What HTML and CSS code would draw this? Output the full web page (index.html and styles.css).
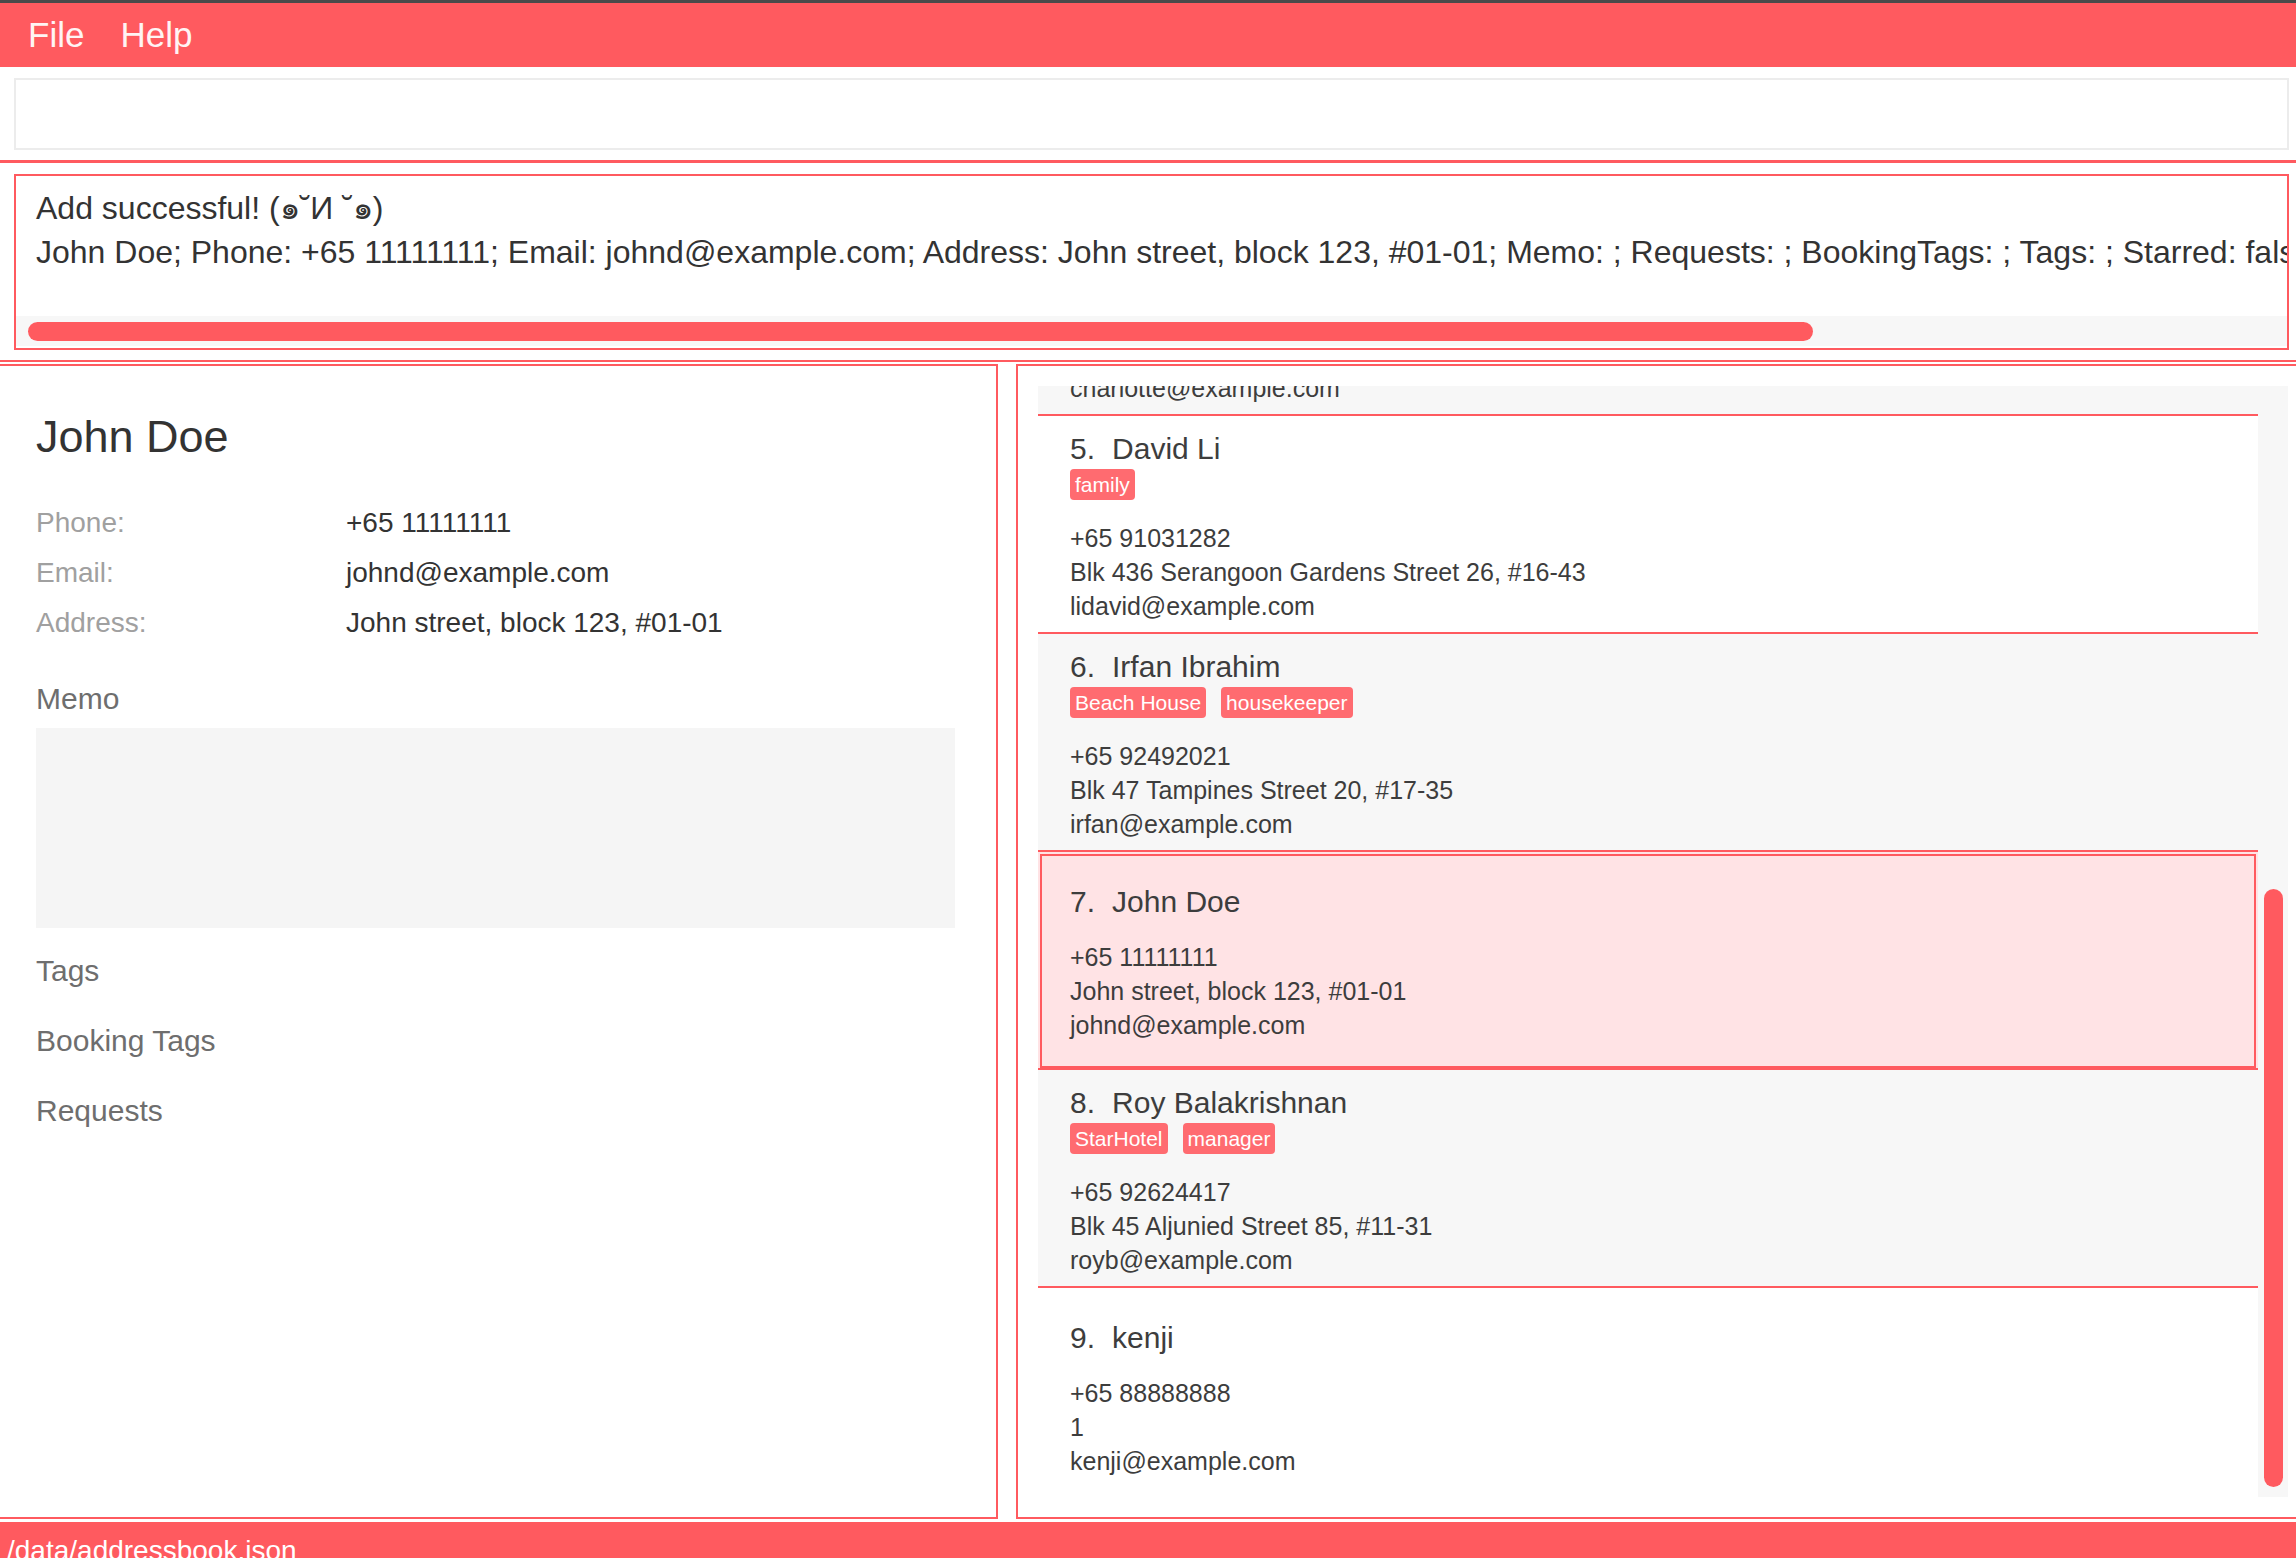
FILE: index.html
```html
<!DOCTYPE html>
<html lang="en">
<head>
<meta charset="utf-8">
<title>AddressBook</title>
<link rel="stylesheet" href="styles.css">
</head>
<body>
<div class="app">
  <div class="topline"></div>
  <nav class="menubar">
    <span class="menu-item">File</span>
    <span class="menu-item">Help</span>
  </nav>
  <section class="command-area">
    <div class="command-box"></div>
  </section>
  <section class="result-area">
    <div class="result-box">
      <div class="result-text">
        <div class="result-line">Add successful! (๑˘И ˘๑)</div>
        <div class="result-line">John Doe; Phone: +65 11111111; Email: johnd@example.com; Address: John street, block 123, #01-01; Memo: ; Requests: ; BookingTags: ; Tags: ; Starred: false</div>
      </div>
      <div class="hscroll"><div class="hthumb"></div></div>
    </div>
  </section>
  <main class="main">
    <section class="detail-panel">
      <h1 class="detail-name">John Doe</h1>
      <div class="detail-grid">
        <span class="detail-label">Phone:</span><span class="detail-value">+65 11111111</span>
        <span class="detail-label">Email:</span><span class="detail-value">johnd@example.com</span>
        <span class="detail-label">Address:</span><span class="detail-value">John street, block 123, #01-01</span>
      </div>
      <h2 class="section-title memo-title">Memo</h2>
      <div class="memo-box"></div>
      <h2 class="section-title tags-title">Tags</h2>
      <h2 class="section-title">Booking Tags</h2>
      <h2 class="section-title">Requests</h2>
    </section>
    <section class="list-panel">
      <div class="list-viewport">
        <div class="list">
          <article class="card alt">
            <div class="card-title"><span>4.</span><span>Charlotte Oliveiro</span></div>
            <div class="tags"><span class="tag">neighbours</span></div>
            <div class="card-details">
              <div>+65 93210283</div>
              <div>Blk 11 Ang Mo Kio Street 74, #11-04</div>
              <div>charlotte@example.com</div>
            </div>
          </article>
          <article class="card">
            <div class="card-title"><span>5.</span><span>David Li</span></div>
            <div class="tags"><span class="tag">family</span></div>
            <div class="card-details">
              <div>+65 91031282</div>
              <div>Blk 436 Serangoon Gardens Street 26, #16-43</div>
              <div>lidavid@example.com</div>
            </div>
          </article>
          <article class="card alt">
            <div class="card-title"><span>6.</span><span>Irfan Ibrahim</span></div>
            <div class="tags"><span class="tag">Beach House</span><span class="tag">housekeeper</span></div>
            <div class="card-details">
              <div>+65 92492021</div>
              <div>Blk 47 Tampines Street 20, #17-35</div>
              <div>irfan@example.com</div>
            </div>
          </article>
          <article class="card selected">
            <div class="card-title"><span>7.</span><span>John Doe</span></div>
            <div class="tags"></div>
            <div class="card-details">
              <div>+65 11111111</div>
              <div>John street, block 123, #01-01</div>
              <div>johnd@example.com</div>
            </div>
          </article>
          <article class="card alt">
            <div class="card-title"><span>8.</span><span>Roy Balakrishnan</span></div>
            <div class="tags"><span class="tag">StarHotel</span><span class="tag">manager</span></div>
            <div class="card-details">
              <div>+65 92624417</div>
              <div>Blk 45 Aljunied Street 85, #11-31</div>
              <div>royb@example.com</div>
            </div>
          </article>
          <article class="card">
            <div class="card-title"><span>9.</span><span>kenji</span></div>
            <div class="tags"></div>
            <div class="card-details">
              <div>+65 88888888</div>
              <div>1</div>
              <div>kenji@example.com</div>
            </div>
          </article>
        </div>
      </div>
      <div class="vscroll"><div class="vthumb"></div></div>
    </section>
  </main>
  <footer class="statusbar">/data/addressbook.json</footer>
</div>
</body>
</html>
```

FILE: styles.css
```css
html, body {
  margin: 0;
  padding: 0;
  background: #ffffff;
}

body {
  width: 2296px;
  height: 1558px;
  overflow: hidden;
  font-family: "Liberation Sans", "DejaVu Sans", "Noto Sans", sans-serif;
  color: #333333;
}

.app {
  width: 2296px;
  height: 1558px;
  overflow: hidden;
  display: flex;
  flex-direction: column;
}

.app > * {
  flex-shrink: 0;
}

.topline {
  height: 3px;
  background: #4a4a4a;
}

.menubar {
  height: 64px;
  background: #ff5a5f;
  display: flex;
  align-items: center;
  gap: 36px;
  padding-left: 28px;
  box-sizing: border-box;
}

.menu-item {
  color: #fff4f4;
  font-size: 35px;
}

.command-area {
  height: 96px;
  box-sizing: border-box;
  padding: 11px 7px 0 14px;
  border-bottom: 3px solid #ff5a5f;
}

.command-box {
  height: 72px;
  box-sizing: border-box;
  border: 2px solid #ececec;
  background: #ffffff;
}

.result-area {
  height: 199px;
  box-sizing: border-box;
  padding: 11px 7px 0 14px;
  border-bottom: 2px solid #ff5a5f;
}

.result-box {
  height: 176px;
  box-sizing: border-box;
  border: 2px solid #ff5a5f;
  overflow: hidden;
  display: flex;
  flex-direction: column;
}

.result-text {
  flex: 0 0 140px;
  box-sizing: border-box;
  padding: 10px 0 0 20px;
  font-size: 32px;
  line-height: 44px;
  color: #333333;
  white-space: nowrap;
  overflow: hidden;
}

.hscroll {
  flex: 0 0 30px;
  box-sizing: border-box;
  background: #f7f7f7;
  padding: 6px 0 0 12px;
}

.hthumb {
  width: 1785px;
  height: 19px;
  border-radius: 10px;
  background: #ff5a5f;
}

.main {
  height: 1160px;
  box-sizing: border-box;
  padding: 2px 0 3px 0;
  display: flex;
  gap: 18px;
}

.detail-panel {
  flex: 0 0 998px;
  height: 1155px;
  box-sizing: border-box;
  border-top: 2px solid #ff5a5f;
  border-right: 2px solid #ff5a5f;
  border-bottom: 2px solid #ff5a5f;
  padding: 45px 41px 0 36px;
  overflow: hidden;
}

.detail-name {
  margin: 0 0 35px 0;
  font-size: 45px;
  line-height: 52px;
  font-weight: normal;
  color: #333333;
}

.detail-grid {
  display: grid;
  grid-template-columns: 310px 1fr;
  font-size: 28px;
  line-height: 50px;
}

.detail-label {
  color: #a0a0a0;
}

.detail-value {
  color: #333333;
}

.section-title {
  margin: 35px 0 0 0;
  font-size: 30px;
  line-height: 35px;
  font-weight: normal;
  color: #6e6e6e;
}

.memo-title {
  margin-top: 33px;
}

.memo-box {
  margin-top: 12px;
  height: 200px;
  background: #f5f5f5;
}

.tags-title {
  margin-top: 25px;
}

.list-panel {
  flex: 0 0 1294px;
  height: 1155px;
  box-sizing: border-box;
  border: 2px solid #ff5a5f;
  padding: 20px;
  display: flex;
  overflow: hidden;
}

.list-viewport {
  flex: 0 0 1220px;
  height: 1111px;
  overflow: hidden;
}

.list {
  margin-top: -188px;
}

.card {
  height: 218px;
  box-sizing: border-box;
  padding: 4px 0 0 32px;
  border-bottom: 2px solid #ff5a5f;
  background: #ffffff;
  display: flex;
  flex-direction: column;
  justify-content: center;
  color: #3d3d3d;
}

.card.alt {
  background: #f7f7f7;
}

.card.selected {
  background: #ffe3e5;
  outline: 2px solid #ff5a5f;
  outline-offset: -4px;
}

.card-title {
  display: flex;
  gap: 17px;
  font-size: 30px;
  line-height: 40px;
}

.tags {
  display: flex;
  gap: 15px;
  height: 31px;
  margin-bottom: 3px;
}

.tags:empty {
  display: none;
}

.tag {
  background: #ff6b70;
  color: #ffffff;
  font-size: 21px;
  line-height: 31px;
  padding: 0 5px;
  border-radius: 4px;
}

.card-details {
  margin-top: 18px;
  font-size: 25px;
  line-height: 34px;
}

.vscroll {
  flex: 0 0 30px;
  height: 1111px;
  box-sizing: border-box;
  background: #f7f7f7;
  padding: 503px 5px 10px 6px;
}

.vthumb {
  width: 19px;
  height: 598px;
  border-radius: 10px;
  background: #ff5a5f;
}

.statusbar {
  height: 60px;
  box-sizing: border-box;
  background: #ff5a5f;
  color: #ffffff;
  font-size: 28px;
  padding: 13px 0 0 7px;
  line-height: 32px;
}
```
